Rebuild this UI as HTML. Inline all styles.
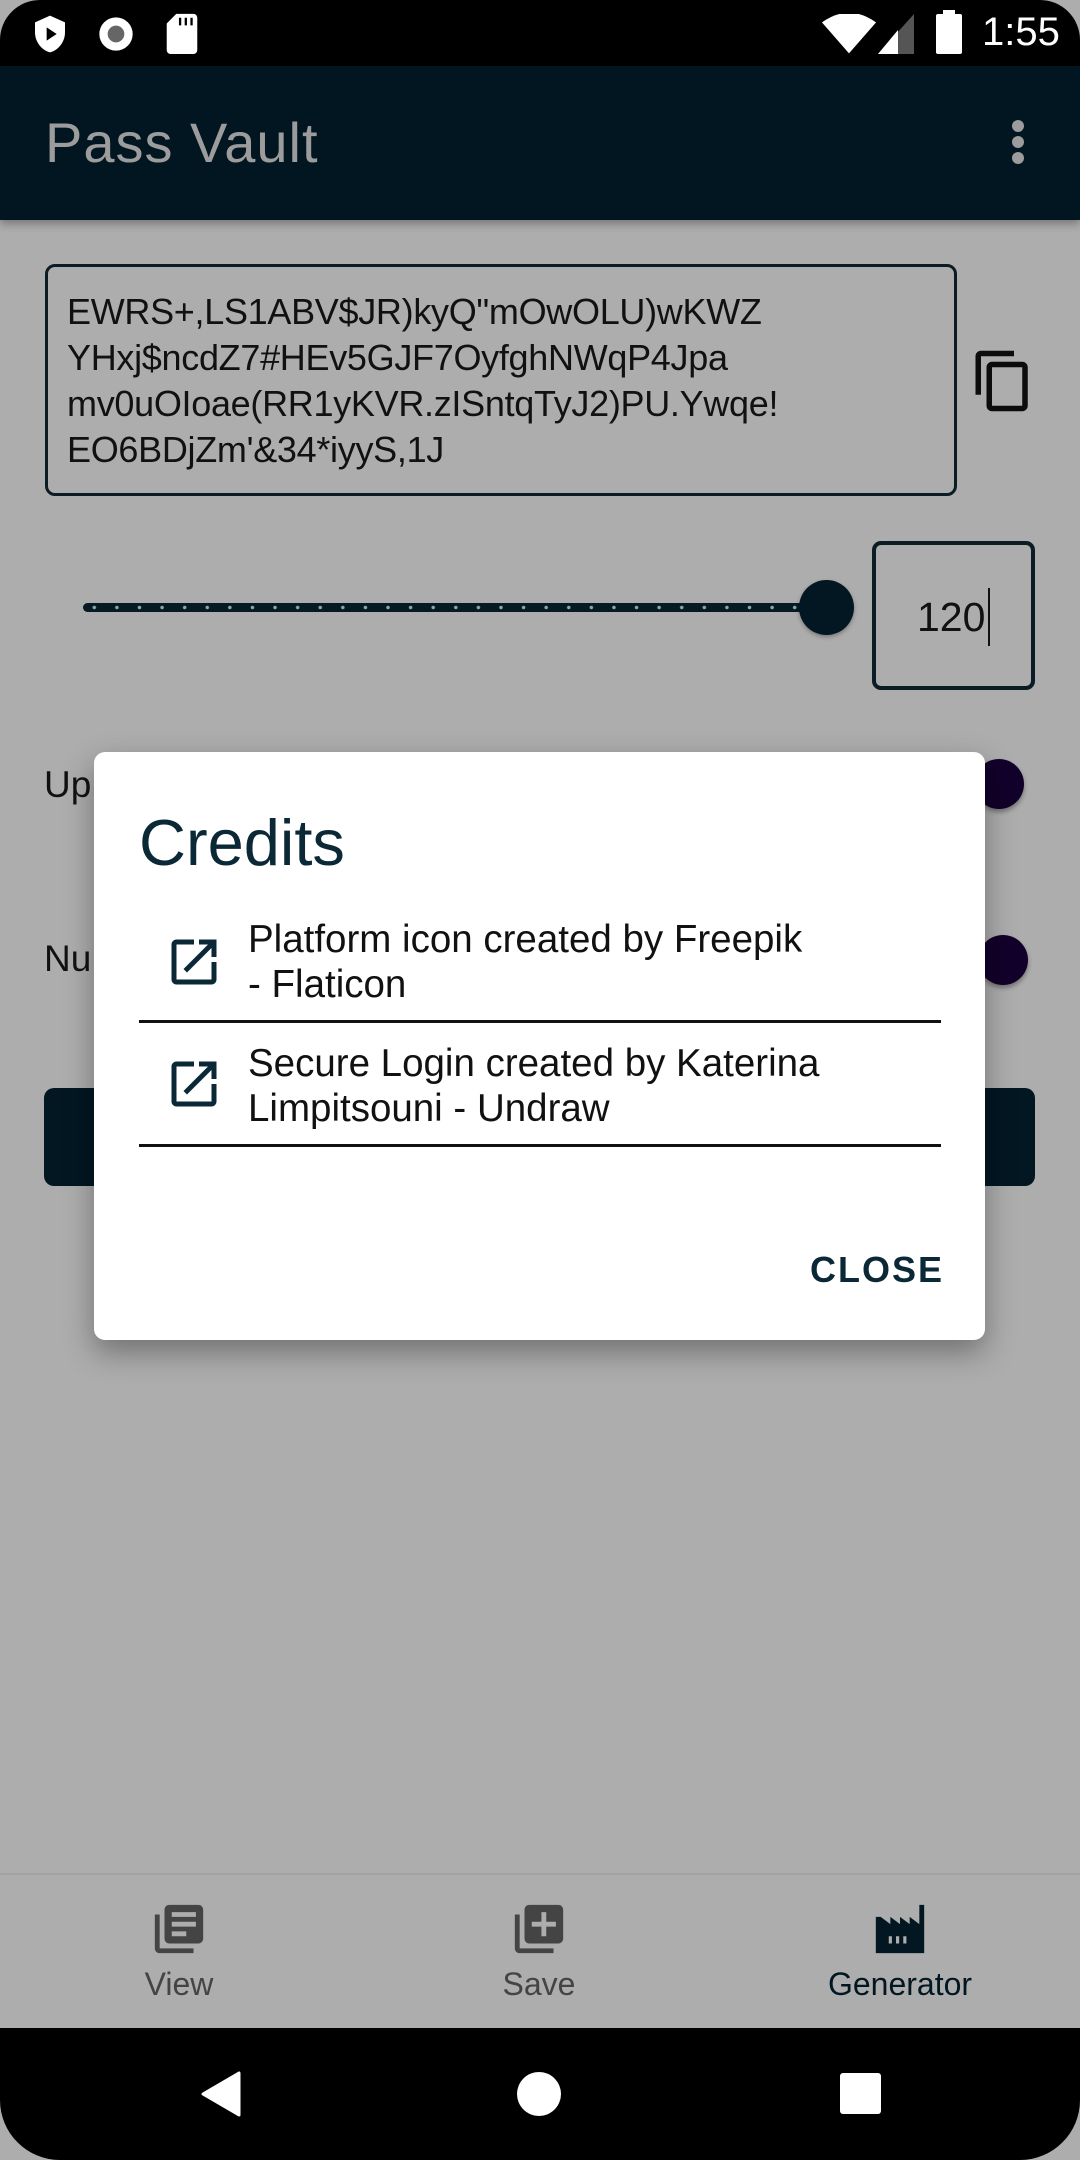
<!DOCTYPE html>
<html><head><meta charset="utf-8"><style>
*{margin:0;padding:0;box-sizing:border-box}
body{width:1080px;height:2160px;background:#000;position:relative;overflow:hidden;font-family:"Liberation Sans",sans-serif}
.abs{position:absolute}
#screen{left:0;top:0;width:1080px;height:2160px;background:#adadad}
#status{left:0;top:0;width:1080px;height:66px;background:#000;border-radius:40px 40px 0 0}
#appbar{left:0;top:66px;width:1080px;height:154px;background:#011621;box-shadow:0 4px 8px rgba(0,0,0,.3)}
.title{left:45px;top:110px;font-size:56px;color:#9c9c9c;letter-spacing:1px}
.pw{left:45px;top:264px;width:912px;height:232px;border:3px solid #0c1c25;border-radius:10px;padding:22px 0 0 19px;font-size:36px;line-height:46px;color:#111;letter-spacing:-0.3px;white-space:nowrap}
.numbox{left:872px;top:541px;width:163px;height:149px;border:4px solid #0c1c25;border-radius:9px}
.lbl{font-size:37px;color:#111}
.sw{width:50px;height:50px;border-radius:50%;background:#12002a;box-shadow:0 3px 5px rgba(0,0,0,.35)}
#btn{left:44px;top:1088px;width:991px;height:98px;background:#021722;border-radius:10px}
#dialog{left:94px;top:752px;width:891px;height:588px;background:#fff;border-radius:11px;box-shadow:0 12px 30px rgba(0,0,0,.35)}
.it{font-size:38.5px;line-height:45px;color:#111;left:154px;white-space:nowrap}
.dv{left:45px;width:802px;height:3px;background:#111}
#nav{left:0;top:1873px;width:1080px;height:155px;background:#adadad;border-top:2px solid #a2a2a2}
.nl{font-size:32px;width:300px;text-align:center;top:1966px}
#sys{left:0;top:2028px;width:1080px;height:132px;background:#000;border-radius:0 0 60px 60px}
</style></head><body>
<div id="screen" class="abs"></div>
<div id="status" class="abs">
 <svg class="abs" style="left:30px;top:14px" width="40" height="40" viewBox="0 0 24 24"><path d="M12 1L3 5v6c0 5.5 3.8 10.7 9 12 5.2-1.3 9-6.5 9-12V5z" fill="#fff"/><path d="M10 8v8l6-4z" fill="#000"/></svg>
 <svg class="abs" style="left:96px;top:14px" width="40" height="40" viewBox="0 0 24 24"><circle cx="12" cy="12" r="10" fill="#fff"/><circle cx="12" cy="12" r="5" fill="#666"/></svg>
 <svg class="abs" style="left:164px;top:12px" width="36" height="42" viewBox="0 0 18 22"><path d="M6 1h9a2 2 0 0 1 2 2v17a2 2 0 0 1-2 2H3a2 2 0 0 1-2-2V6z" fill="#fff"/><path d="M8 3v4M11 3v4M14 3v4" stroke="#000" stroke-width="1.2"/></svg>
 <svg class="abs" style="left:820px;top:14px" width="58" height="40" viewBox="0 0 30 20"><path d="M1 4Q15 -6 29 4L15 20z" fill="#fff"/></svg>
 <svg class="abs" style="left:878px;top:14px" width="36" height="40" viewBox="0 0 18 20"><path d="M18 0V20H0z" fill="#555"/><path d="M10 8V20H0z" fill="#fff"/></svg>
 <div class="abs" style="left:936px;top:14px;width:26px;height:40px;background:#fff;border-radius:2px"></div>
 <div class="abs" style="left:943px;top:10px;width:12px;height:6px;background:#fff"></div>
 <div class="abs" style="left:982px;top:10px;font-size:40px;color:#fff">1:55</div>
</div>
<div id="appbar" class="abs">
 <div class="abs" style="left:1012px;top:54px;width:12px;height:12px;border-radius:50%;background:#9c9c9c;box-shadow:0 16px 0 #9c9c9c,0 32px 0 #9c9c9c"></div>
</div>
<div class="abs title">Pass Vault</div>
<div class="abs pw">EWRS+,LS1ABV$JR)kyQ"mOwOLU)wKWZ<br>YHxj$ncdZ7#HEv5GJF7OyfghNWqP4Jpa<br>mv0uOIoae(RR1yKVR.zISntqTyJ2)PU.Ywqe!<br>EO6BDjZm'&amp;34*iyyS,1J</div>
<svg class="abs" style="left:970px;top:348px" width="66" height="66" viewBox="0 0 24 24"><path d="M16 1H4c-1.1 0-2 .9-2 2v14h2V3h12V1zm3 4H8c-1.1 0-2 .9-2 2v14c0 1.1.9 2 2 2h11c1.1 0 2-.9 2-2V7c0-1.1-.9-2-2-2zm0 16H8V7h11v14z" fill="#0c0c0c"/></svg>
<div class="abs" style="left:83px;top:603px;width:745px;height:9px;border-radius:5px;background:#071a24;background-image:radial-gradient(circle,#8aa 1.5px,transparent 2px);background-size:22.6px 9px"></div>
<div class="abs" style="left:799px;top:580px;width:55px;height:55px;border-radius:50%;background:#021722;box-shadow:0 2px 4px rgba(0,0,0,.3)"></div>
<div class="abs numbox"></div>
<div class="abs" style="left:917px;top:594px;font-size:41px;color:#111">120</div>
<div class="abs" style="left:988px;top:588px;width:2px;height:58px;background:#111"></div>
<div class="abs lbl" style="left:44px;top:764px">Up</div>
<div class="abs lbl" style="left:44px;top:938px">Nu</div>
<div class="abs sw" style="left:974px;top:759px"></div>
<div class="abs sw" style="left:978px;top:935px"></div>
<div id="btn" class="abs"></div>
<div id="dialog" class="abs">
 <div class="abs" style="left:45px;top:53px;font-size:65px;color:#0b2837">Credits</div>
 <svg class="abs" style="left:70px;top:180px" width="60" height="60" viewBox="0 0 24 24"><path d="M19 19H5V5h7V3H5c-1.1 0-2 .9-2 2v14c0 1.1.9 2 2 2h14c1.1 0 2-.9 2-2v-7h-2v7zM14 3v2h3.6l-9.8 9.8 1.4 1.4L19 6.4V10h2V3h-7z" fill="#0b2837"/></svg>
 <div class="abs it" style="top:165px">Platform icon created by Freepik<br>- Flaticon</div>
 <div class="abs dv" style="top:268px"></div>
 <svg class="abs" style="left:70px;top:302px" width="60" height="60" viewBox="0 0 24 24"><path d="M19 19H5V5h7V3H5c-1.1 0-2 .9-2 2v14c0 1.1.9 2 2 2h14c1.1 0 2-.9 2-2v-7h-2v7zM14 3v2h3.6l-9.8 9.8 1.4 1.4L19 6.4V10h2V3h-7z" fill="#0b2837"/></svg>
 <div class="abs it" style="top:289px">Secure Login created by Katerina<br>Limpitsouni - Undraw</div>
 <div class="abs dv" style="top:392px"></div>
 <div class="abs" style="left:716px;top:497px;font-size:36px;font-weight:bold;letter-spacing:2px;color:#0b2837">CLOSE</div>
</div>
<div id="nav" class="abs"></div>
<svg class="abs" style="left:150px;top:1900px" width="58" height="58" viewBox="0 0 24 24"><path d="M4 6H2v14c0 1.1.9 2 2 2h14v-2H4V6zm16-4H8c-1.1 0-2 .9-2 2v12c0 1.1.9 2 2 2h12c1.1 0 2-.9 2-2V4c0-1.1-.9-2-2-2zm-1 9H9V9h10v2zm-4 4H9v-2h6v2zm4-8H9V5h10v2z" fill="#444"/></svg>
<svg class="abs" style="left:510px;top:1900px" width="58" height="58" viewBox="0 0 24 24"><path d="M4 6H2v14c0 1.1.9 2 2 2h14v-2H4V6zm16-4H8c-1.1 0-2 .9-2 2v12c0 1.1.9 2 2 2h12c1.1 0 2-.9 2-2V4c0-1.1-.9-2-2-2zm-1 9h-4v4h-2v-4H9V9h4V5h2v4h4v2z" fill="#444"/></svg>
<svg class="abs" style="left:871px;top:1900px" width="58" height="58" viewBox="0 0 24 24"><path d="M22 2h-2v8l-4-3v3l-4-3v3L8 7v3L4 7H2v15h20z" fill="#021722"/><path d="M8 15v3M11 15v3M14 15v3" stroke="#adadad" stroke-width="1.3"/></svg>
<div class="abs nl" style="left:29px;color:#444">View</div>
<div class="abs nl" style="left:389px;color:#444">Save</div>
<div class="abs nl" style="left:750px;color:#021722">Generator</div>
<div id="sys" class="abs">
 <svg class="abs" style="left:200px;top:42px" width="42" height="48" viewBox="0 0 14 16"><path d="M13 1V15L1 8z" fill="#fff" stroke="#fff" stroke-linejoin="round"/></svg>
 <div class="abs" style="left:517px;top:44px;width:44px;height:44px;border-radius:50%;background:#fff"></div>
 <div class="abs" style="left:840px;top:45px;width:41px;height:41px;border-radius:3px;background:#fff"></div>
</div>
</body></html>
